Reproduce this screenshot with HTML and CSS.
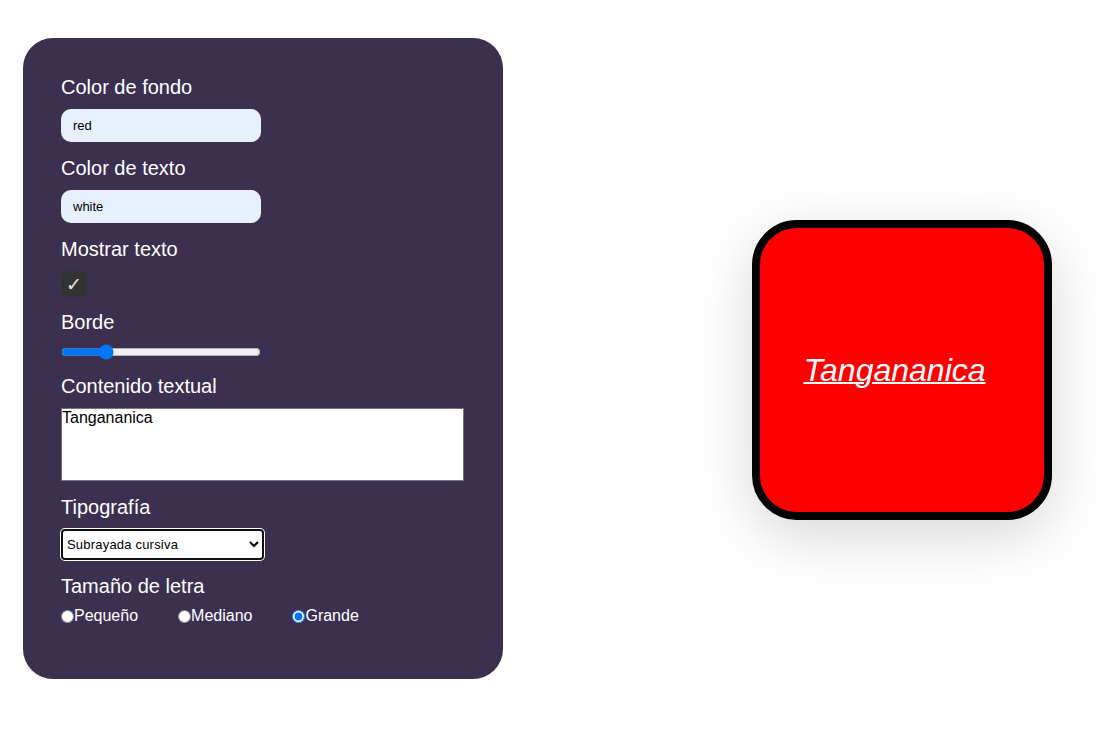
FILE: index.html
```html
<!DOCTYPE html>
<html lang="es">
<head>
<meta charset="utf-8">
<title>Tarjeta</title>
<link rel="stylesheet" href="styles.css">
</head>
<body>
<main class="page">
  <form class="panel">
    <div class="group">
      <label class="label" for="bg">Color de fondo</label>
      <input class="text-input" id="bg" type="text" value="red">
    </div>
    <div class="group">
      <label class="label" for="fg">Color de texto</label>
      <input class="text-input" id="fg" type="text" value="white">
    </div>
    <div class="group">
      <label class="label" for="show">Mostrar texto</label>
      <input class="check" id="show" type="checkbox" checked>
    </div>
    <div class="group">
      <label class="label" for="border">Borde</label>
      <input class="range" id="border" type="range" min="0" max="40" value="8">
    </div>
    <div class="group">
      <label class="label" for="content">Contenido textual</label>
      <textarea class="area" id="content" spellcheck="false">Tangananica</textarea>
    </div>
    <div class="group">
      <label class="label" for="font">Tipografía</label>
      <select class="select" id="font">
        <option>Normal</option>
        <option>Negrita</option>
        <option>Cursiva</option>
        <option selected>Subrayada cursiva</option>
      </select>
    </div>
    <div class="group">
      <span class="label">Tamaño de letra</span>
      <div class="radios">
        <label class="radio"><input type="radio" name="size">Pequeño</label>
        <label class="radio"><input type="radio" name="size">Mediano</label>
        <label class="radio"><input type="radio" name="size" checked>Grande</label>
      </div>
    </div>
  </form>
  <section class="preview">
    <div class="card"><span class="card-text">Tangananica</span></div>
  </section>
</main>
</body>
</html>
```
FILE: styles.css
```css
* { box-sizing: border-box; }
html, body { margin: 0; padding: 0; background: #fff; }
body { font-family: "Liberation Sans", Arial, sans-serif; }

.page {
  display: flex;
  align-items: flex-start;
  padding: 38px 0 0 23px;
}

.panel {
  width: 480px;
  background: #3c3050;
  border-radius: 30px;
  padding: 38px 38px 54px;
  display: flex;
  flex-direction: column;
  gap: 15px;
  color: #fff;
}

.group { display: flex; flex-direction: column; align-items: flex-start; }

.label {
  display: block;
  font-size: 20px;
  line-height: 23px;
  margin-bottom: 10px;
  color: #fff;
}

.text-input {
  width: 200px;
  height: 33px;
  border: none;
  border-radius: 10px;
  background: #e8f0fe;
  padding: 0 12px;
  font-family: "Liberation Sans", Arial, sans-serif;
  font-size: 13px;
  color: #000;
  outline: none;
}

.check {
  appearance: none;
  -webkit-appearance: none;
  width: 26px;
  height: 26px;
  margin: 0 0 -1px;
  border-radius: 4px;
  background: #333;
  display: flex;
  align-items: center;
  justify-content: center;
}
.check:checked::after {
  content: "✓";
  color: #e6e6e6;
  font-family: "DejaVu Sans", sans-serif;
  font-size: 19px;
  line-height: 1;
}

.range {
  width: 200px;
  height: 16px;
  margin: 0;
  accent-color: #0075ff;
}

.area {
  width: 403px;
  height: 73px;
  margin: 0;
  padding: 0;
  border: 1px solid #767676;
  resize: none;
  font-family: "Liberation Sans", Arial, sans-serif;
  font-size: 16px;
  color: #000;
  background: #fff;
}

.select {
  width: 203px;
  height: 31px;
  margin: 0;
  border: 2px solid #101010;
  border-radius: 4px;
  box-shadow: 0 0 0 1px #fff;
  background: #fff;
  font-family: "Liberation Sans", Arial, sans-serif;
  font-size: 13px;
  letter-spacing: 0.2px;
  color: #000;
  padding: 0;
  outline: none;
}

.radios {
  display: flex;
  gap: 40px;
  font-size: 16px;
  line-height: 18px;
  margin-top: -1px;
}
.radio { display: flex; align-items: center; color: #fff; }
.radio input { margin: 0; width: 13px; height: 13px; }

.preview { margin: 182px 0 0 249px; }

.card {
  width: 300px;
  height: 300px;
  background: red;
  border: 8px solid #000;
  border-radius: 45px;
  box-shadow: 0 16px 60px rgba(0, 0, 0, 0.16);
  display: flex;
  align-items: center;
  justify-content: center;
  padding-right: 15px;
}

.card-text {
  color: #fff;
  font-size: 32px;
  font-style: italic;
  text-decoration: underline;
  text-decoration-thickness: 2px;
}
```
